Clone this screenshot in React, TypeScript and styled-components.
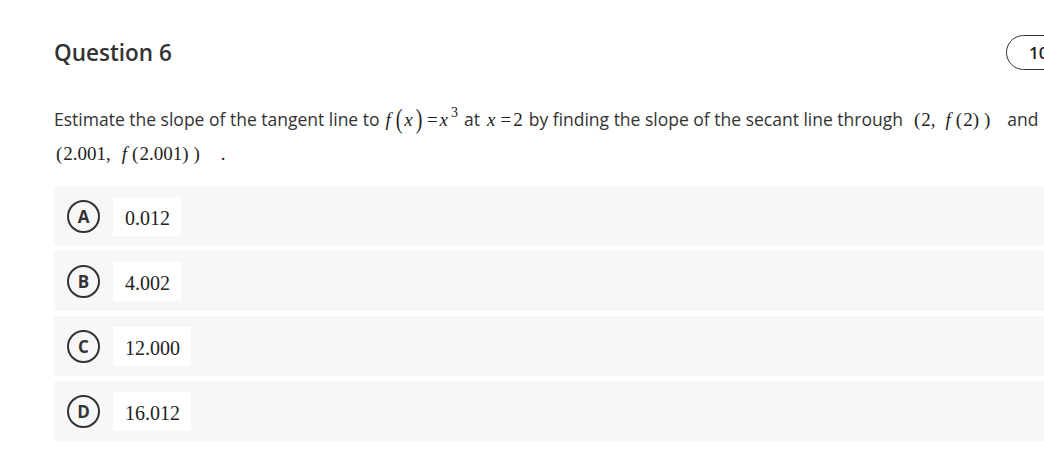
import * as React from "react";
import styled, { createGlobalStyle } from "styled-components";

const GlobalStyle = createGlobalStyle`
  html, body {
    margin: 0;
    padding: 0;
    background: #ffffff;
    overflow: hidden;
  }
  body {
    font-family: "Open Sans", "Liberation Sans", sans-serif;
    color: #333333;
  }
`;

type Choice = {
  letter: string;
  value: string;
};

const choices: Choice[] = [
  { letter: "A", value: "0.012" },
  { letter: "B", value: "4.002" },
  { letter: "C", value: "12.000" },
  { letter: "D", value: "16.012" },
];

export default class App extends React.Component {
  renderChoice = (choice: Choice) => {
    return (
      <OptionRow key={choice.letter}>
        <LetterBadge>{choice.letter}</LetterBadge>
        <ValueBox>{choice.value}</ValueBox>
      </OptionRow>
    );
  };

  render() {
    return (
      <Page>
        <GlobalStyle />
        <Header>
          <Title>Question 6</Title>
          <PointsPill>10 points</PointsPill>
        </Header>
        <Prompt>
          Estimate the slope of the tangent line to
          <Math>
            <I $gap={1}>f</I>
            <BigParen $gap={5}>(</BigParen>
            <I $gap={2}>x</I>
            <BigParen $gap={3}>)</BigParen>
            <Op>=</Op>
            <I>x</I>
            <Sup>3</Sup>
          </Math>
          at
          <Math>
            <I $gap={2}>x</I>
            <Op>=</Op>2
          </Math>
          by finding the slope of the secant line through
          <Math $right={16}>
            <Paren $gap={6}>(</Paren>
            2,
            <I $gap={10}>f</I>
            <Paren $gap={5}>(</Paren>2<Paren>)</Paren>
            <Paren $gap={4}>)</Paren>
          </Math>
          and
          <br />
          <Math $first>
            <Paren $gap={2}>(</Paren>
            2.001,
            <I $gap={11}>f</I>
            <Paren $gap={5}>(</Paren>2.001<Paren>)</Paren>
            <Paren $gap={4}>)</Paren>
            <Dot>.</Dot>
          </Math>
        </Prompt>
        <OptionList>{choices.map(this.renderChoice)}</OptionList>
      </Page>
    );
  }
}

const Page = styled.div`
  width: 1120px;
  padding: 35px 0 0 54px;
  box-sizing: border-box;
`;

const Header = styled.div`
  display: flex;
  align-items: center;
  justify-content: space-between;
  height: 35px;
  padding-right: 4px;
`;

const Title = styled.h2`
  margin: 0;
  font-size: 22.5px;
  font-weight: 600;
  color: #333333;
`;

const PointsPill = styled.div`
  width: 110px;
  height: 35px;
  box-sizing: border-box;
  border: 1px solid #333333;
  border-radius: 18px;
  padding-left: 22px;
  display: flex;
  align-items: center;
  font-size: 17px;
  font-weight: 600;
  color: #222222;
  white-space: nowrap;
`;

const Prompt = styled.p`
  margin: 32px 0 0 0;
  font-size: 17.5px;
  line-height: 34px;
  color: #333333;
  white-space: nowrap;
`;

const Math = styled.span<{ $first?: boolean; $right?: number }>`
  margin-left: ${(p) => (p.$first ? 0 : 5)}px;
  margin-right: ${(p) => (p.$first ? 0 : p.$right ?? 6)}px;
  font-family: "Liberation Serif", "DejaVu Serif", serif;
  font-size: 19px;
  line-height: 1;
  color: #222222;
`;

const I = styled.span<{ $gap?: number }>`
  font-style: italic;
  margin-left: ${(p) => p.$gap ?? 0}px;
`;

const BigParen = styled.span<{ $gap?: number }>`
  display: inline-block;
  line-height: 1;
  margin-left: ${(p) => p.$gap ?? 0}px;
  transform: scale(1.05, 1.45);
  transform-origin: center 60%;
`;

const Paren = styled.span<{ $gap?: number }>`
  margin-left: ${(p) => p.$gap ?? 0}px;
  margin-right: 1px;
`;

const Dot = styled.span`
  margin-left: 20px;
`;

const Op = styled.span`
  margin: 0 2px 0 5px;
`;

const Sup = styled.span`
  display: inline-block;
  line-height: 1;
  font-size: 14px;
  position: relative;
  top: -9px;
  margin-left: 3px;
`;

const OptionList = styled.div`
  display: flex;
  flex-direction: column;
  gap: 5px;
  margin-top: 16px;
`;

const OptionRow = styled.div`
  display: flex;
  align-items: center;
  height: 60px;
  background: #f7f7f7;
  border-radius: 3px;
  padding-left: 13px;
  box-sizing: border-box;
`;

const LetterBadge = styled.div`
  width: 33px;
  height: 33px;
  box-sizing: border-box;
  border: 2px solid #333333;
  border-radius: 50%;
  display: flex;
  align-items: center;
  justify-content: center;
  font-size: 17px;
  font-weight: 700;
  color: #333333;
  flex-shrink: 0;
`;

const ValueBox = styled.div`
  margin-left: 13px;
  background: #ffffff;
  height: 39px;
  padding: 4px 11px 0 12px;
  display: flex;
  align-items: center;
  box-sizing: border-box;
  font-family: "Liberation Serif", "DejaVu Serif", serif;
  font-size: 20px;
  color: #222222;
`;
